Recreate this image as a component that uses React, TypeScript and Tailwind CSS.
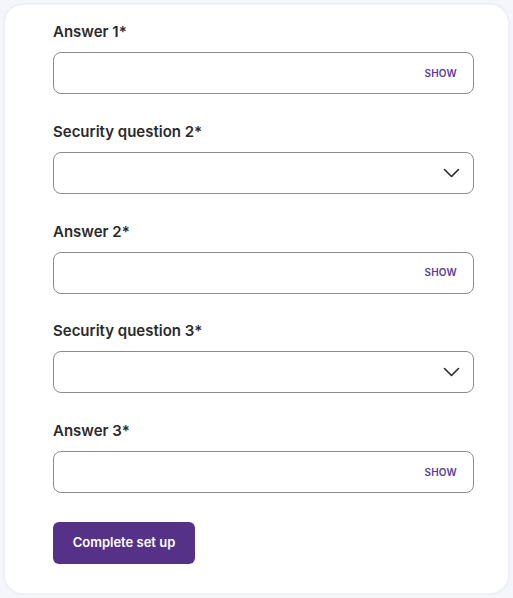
type Field = { label: string; kind: 'answer' | 'question' };

const fields: Field[] = [
  { label: 'Answer 1*', kind: 'answer' },
  { label: 'Security question 2*', kind: 'question' },
  { label: 'Answer 2*', kind: 'answer' },
  { label: 'Security question 3*', kind: 'question' },
  { label: 'Answer 3*', kind: 'answer' },
];

function Chevron() {
  return (
    <svg width="17" height="10" viewBox="0 0 17 10" fill="none" className="text-[#2a2a2e]">
      <path d="M1.5 1.5 L8.5 8.5 L15.5 1.5" stroke="currentColor" strokeWidth="1.6" strokeLinecap="round" strokeLinejoin="round" />
    </svg>
  );
}

function FieldRow({ field }: { field: Field }) {
  return (
    <div className="flex flex-col">
      <label className="h-5 text-[15px] leading-5 font-semibold text-[#2a2a2e]">{field.label}</label>
      <div className="mt-[10px] flex h-[42px] items-center rounded-lg border border-[#8c8c8c] bg-white pl-4 pr-[13px]">
        <div className="flex-1" />
        {field.kind === 'answer' ? (
          <span className="mr-[3px] text-[10px] font-semibold tracking-[0.2px] text-[#5b3a98]">SHOW</span>
        ) : (
          <Chevron />
        )}
      </div>
    </div>
  );
}

export default function App() {
  return (
    <div
      className="min-h-[598px] w-[513px] bg-[#f5f6fb] p-[3px]"
      style={{ fontFamily: 'Inter, "Noto Sans", sans-serif' }}
    >
      <div className="h-[592px] rounded-[20px] border-2 border-[#eef0f8] bg-white pl-[48px] pr-[34px] pt-[17px]">
        <div className="flex flex-col gap-[27.75px]">
          {fields.map((f, i) => (
            <FieldRow key={i} field={f} />
          ))}
        </div>
        <button className="mt-[29px] h-[42px] w-[142px] rounded-md bg-[#553288] text-[13px] font-semibold text-white">
          Complete set up
        </button>
      </div>
    </div>
  );
}
